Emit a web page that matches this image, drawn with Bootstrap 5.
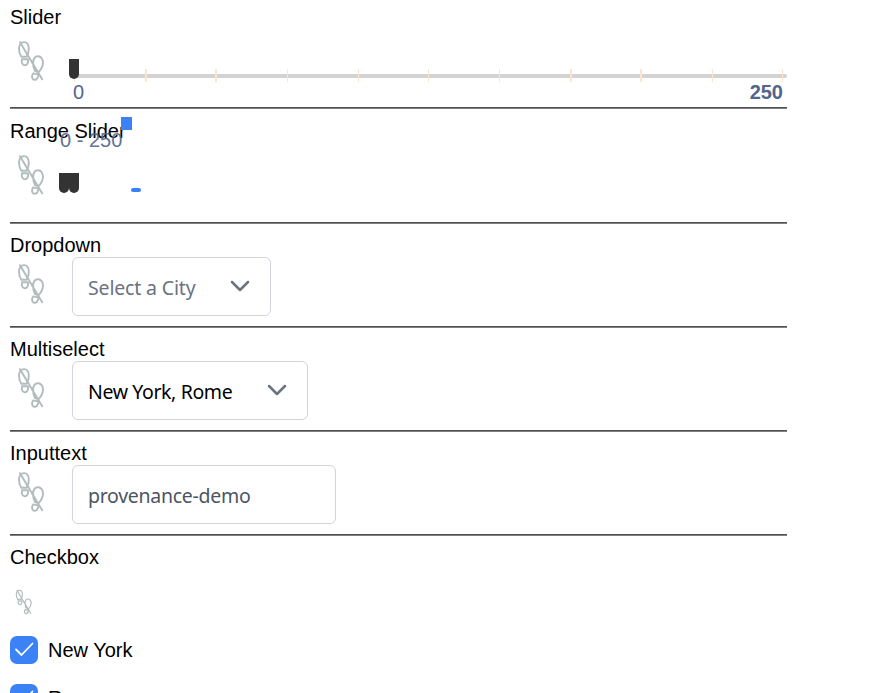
<!DOCTYPE html>
<html lang="en">
<head>
<meta charset="utf-8">
<title>Provenance widgets</title>
<link href="https://cdn.jsdelivr.net/npm/bootstrap@5.3.0/dist/css/bootstrap.min.css" rel="stylesheet">
<style>
body{font:20px/24px "Liberation Sans",Arial,sans-serif;color:#000;background:#fff;overflow:hidden}
.demo{width:777px;margin:5px 0 0 10px}
.demo-item{height:104px}
.demo-item.tall{height:114px}
.demo-item hr{height:2px;border:0;margin:0;background:linear-gradient(#505053 50%,#7e7e80 50%);opacity:1}
.steps{width:28px;height:42px;margin:6px 0 0 7px;flex:none}
.steps.mini{width:17.5px;height:26px;margin:0 0 0 4.6px;display:block}
.mini-wrap{height:67px;padding-top:20px}
.item-body{height:69px}
.tall .item-body{height:78px}
.tall .steps{margin-top:11px}
.tall.range .item-body{height:79px}
.field{height:59px;margin-left:27px;border:1px solid #d1d5db;border-radius:6px;padding:2px 20px 0 15px;font-family:"Noto Sans",sans-serif;font-size:19.5px}
.f-city{width:199px;color:#6b7280;letter-spacing:-.16px}
.f-multi{width:236px;letter-spacing:-.38px}
.f-input{width:264px;color:#4b5563;letter-spacing:-.28px}
.field svg{width:20px;height:12px;margin-top:-3px}
.scale{width:718px;margin-left:24px}
.bar{height:24px;margin-top:29px}
.rail{left:5px;right:0;top:16px;height:4px;background:#d3d3d3;border-radius:2px}
.ticks{left:5px;top:11px;height:13px;display:grid;grid-template-columns:71px 70px 72px 71px 70px 71px 71px 70px 72px 70px 1px}
.ticks i{width:1px;background:#ffe4cf}
.ticks i.wide{width:2px}
.knob{width:10px;height:20px;background:#333;border-radius:0 0 5px 5px}
.bar .knob{left:0;top:1px}
.values{color:#53658a;line-height:24px;padding:0 4px 0 4px;margin-top:-2px}
.range-text{left:50px;top:9px;color:#53658a;opacity:.9}
.flag{left:111px;top:-2px;width:11px;height:13px;background:#3b82f6}
.pair{margin:30px 0 0 14px}
.dash{width:10px;height:4px;border-radius:2px;background:#3b82f6;margin:45px 0 0 52px}
.tick-box{width:28px;height:28px;border-radius:7px;background:#3b82f6}
.choice{height:28px;gap:10px;margin-bottom:20px}
</style>
<script src="https://cdn.jsdelivr.net/npm/bootstrap@5.3.0/dist/js/bootstrap.bundle.min.js"></script>
</head>
<body>
<svg class="d-none" xmlns="http://www.w3.org/2000/svg">
<symbol id="feet" viewBox="0 0 28 42"><g fill="none" stroke="#b3bcbc" stroke-width="1.900" stroke-linejoin="round"><path d="M7 2.100c3.200 0 4.800 3 4.800 6.600 0 3.200-.9 5.900-2.200 8.100H4.300C2.800 14.400 2 11.800 2 8.700c0-3.700 1.900-6.600 5-6.600zM4.900 19.300h6c.7 3.400-.6 5.900-3.100 5.900-2.300 0-3.500-2.300-2.900-5.900z"/><path d="M21 16.200c3.200 0 5.100 3 5 6.800-.1 3.900-2.400 7-4.500 9.400l-3.600-1.600c-1.200-2.500-1.900-5-1.800-7.900.1-3.900 1.900-6.700 4.900-6.700zM16.300 33.300l5.200 1.300c-.5 3.300-1.900 5.200-3.700 5.200-2 0-2.900-1.700-2.700-3.600.1-1.200.5-2.200 1.200-2.900zM2.200 2.300l.8-.1L25.600 40"/></g></symbol>
<symbol id="chev" viewBox="0 0 20 12"><path d="M2 2l8 8 8-8" fill="none" stroke="#6b7280" stroke-width="2.500" stroke-linecap="round" stroke-linejoin="round"/></symbol>
<symbol id="check" viewBox="0 0 28 28"><path d="M6 13.500l5.500 5.500L22.500 7.500" fill="none" stroke="#fff" stroke-width="1.800" stroke-linecap="round" stroke-linejoin="round"/></symbol>
</svg>
<main class="demo">
<section class="demo-item tall">
<div>Slider</div>
<div class="item-body d-flex align-items-start">
<svg class="steps"><use href="#feet"/></svg>
<div class="scale">
<div class="bar position-relative"><div class="rail position-absolute"></div><div class="ticks position-absolute"><i></i><i class="wide"></i><i class="wide"></i><i></i><i></i><i></i><i></i><i class="wide"></i><i class="wide"></i><i></i><i></i></div><div class="knob position-absolute"></div></div>
<div class="values d-flex justify-content-between"><span>0</span><b>250</b></div>
</div>
</div>
<hr>
</section>
<section class="demo-item tall range position-relative">
<div>Range Slider</div>
<span class="range-text position-absolute">0 - 250</span><i class="flag position-absolute"></i>
<div class="item-body d-flex align-items-start">
<svg class="steps"><use href="#feet"/></svg>
<div class="pair d-flex"><div class="knob"></div><div class="knob"></div></div><div class="dash"></div>
</div>
<hr>
</section>
<section class="demo-item">
<div>Dropdown</div>
<div class="item-body d-flex align-items-start">
<svg class="steps"><use href="#feet"/></svg>
<div class="field f-city d-flex align-items-center justify-content-between"><span>Select a City</span><svg><use href="#chev"/></svg></div>
</div>
<hr>
</section>
<section class="demo-item">
<div>Multiselect</div>
<div class="item-body d-flex align-items-start">
<svg class="steps"><use href="#feet"/></svg>
<div class="field f-multi d-flex align-items-center justify-content-between"><span>New York, Rome</span><svg><use href="#chev"/></svg></div>
</div>
<hr>
</section>
<section class="demo-item">
<div>Inputtext</div>
<div class="item-body d-flex align-items-start">
<svg class="steps"><use href="#feet"/></svg>
<div class="field f-input d-flex align-items-center"><span>provenance-demo</span></div>
</div>
<hr>
</section>
<section>
<div>Checkbox</div>
<div class="mini-wrap"><svg class="steps mini"><use href="#feet"/></svg></div>
<div class="choice d-flex align-items-center"><svg class="tick-box"><use href="#check"/></svg><span>New York</span></div>
<div class="choice d-flex align-items-center"><svg class="tick-box"><use href="#check"/></svg><span>Rome</span></div>
</section>
</main>
</body>
</html>
